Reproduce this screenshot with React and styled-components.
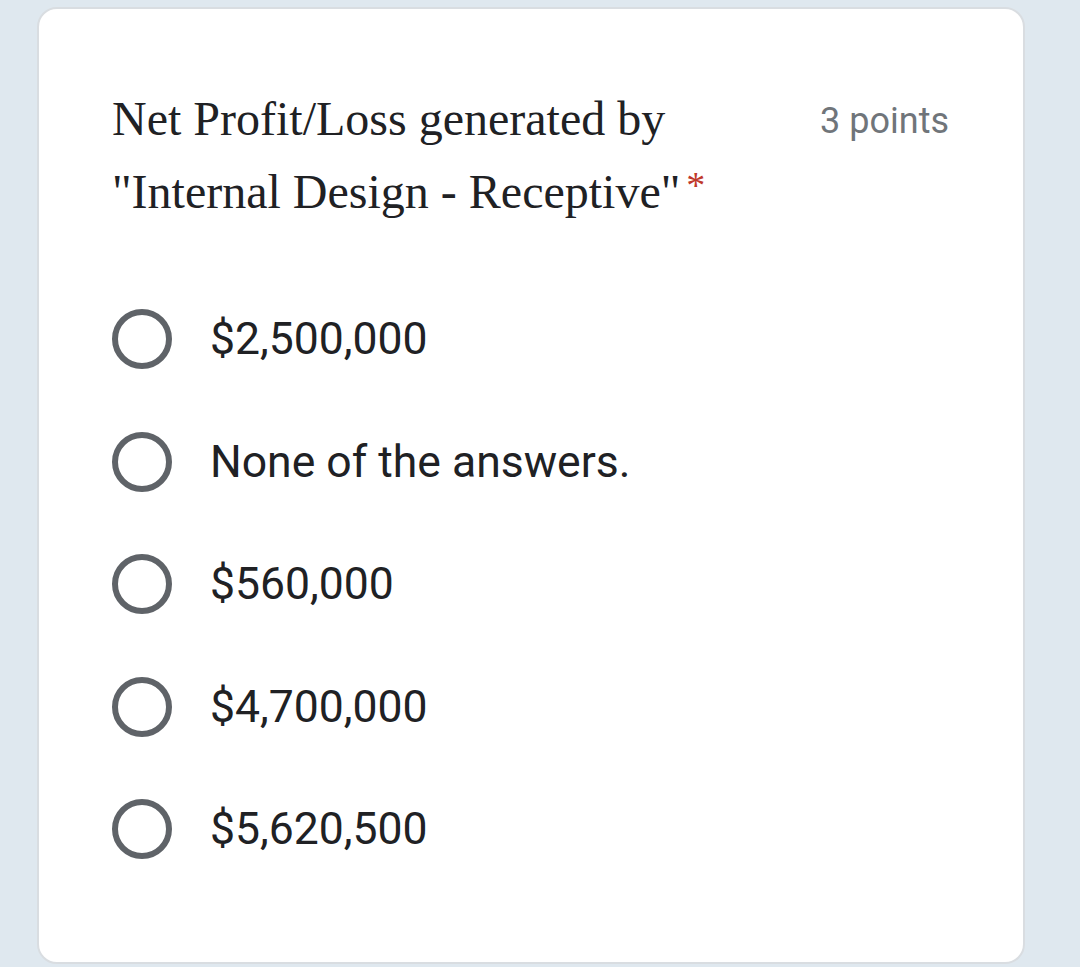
import styled, { createGlobalStyle } from 'styled-components'

const GlobalStyle = createGlobalStyle`
  html, body {
    margin: 0;
    padding: 0;
    background: #dfe8ef;
  }
`

const options = ['$2,500,000', 'None of the answers.', '$560,000', '$4,700,000', '$5,620,500']

export default function App() {
  return (
    <>
      <GlobalStyle />
      <Page>
        <Card>
          <Header>
            <Question>
              Net Profit/Loss generated by "Internal Design - Receptive"
              <Required>*</Required>
            </Question>
            <Points>3 points</Points>
          </Header>
          <OptionList>
            {options.map((o) => (
              <Option key={o}>
                <Radio />
                <Label>{o}</Label>
              </Option>
            ))}
          </OptionList>
        </Card>
      </Page>
    </>
  )
}

const Page = styled.div`
  padding: 7px 55px 0 37px;
  height: 967px;
  box-sizing: border-box;
  overflow: hidden;
`

const Card = styled.div`
  background: #fff;
  border: 2px solid #d9dde1;
  border-radius: 20px;
  height: 957px;
  box-sizing: border-box;
  padding: 87px 74px 0 73px;
`

const Header = styled.div`
  display: flex;
  justify-content: space-between;
  align-items: flex-start;
`

const Question = styled.div`
  width: 620px;
  font-family: 'Liberation Serif', serif;
  font-size: 48px;
  line-height: 73px;
  color: #202124;
  margin-top: -14px;
`

const Required = styled.span`
  color: #c0392b;
  font-family: 'Liberation Serif', serif;
  font-size: 38px;
  margin-left: 6px;
  vertical-align: top;
  position: relative;
  top: -6px;
`

const Points = styled.div`
  font-family: Roboto, sans-serif;
  font-size: 36px;
  color: #70757a;
  line-height: 44px;
  margin-top: 3px;
`

const OptionList = styled.div`
  display: flex;
  flex-direction: column;
  gap: 62.5px;
  margin-top: 81px;
`

const Option = styled.div`
  display: flex;
  align-items: center;
  gap: 38px;
`

const Radio = styled.div`
  width: 60px;
  height: 60px;
  border: 6px solid #5f6368;
  border-radius: 50%;
  box-sizing: border-box;
  flex-shrink: 0;
`

const Label = styled.div`
  font-family: Roboto, sans-serif;
  font-size: 44.5px;
  color: #202124;
  line-height: 60px;
`
